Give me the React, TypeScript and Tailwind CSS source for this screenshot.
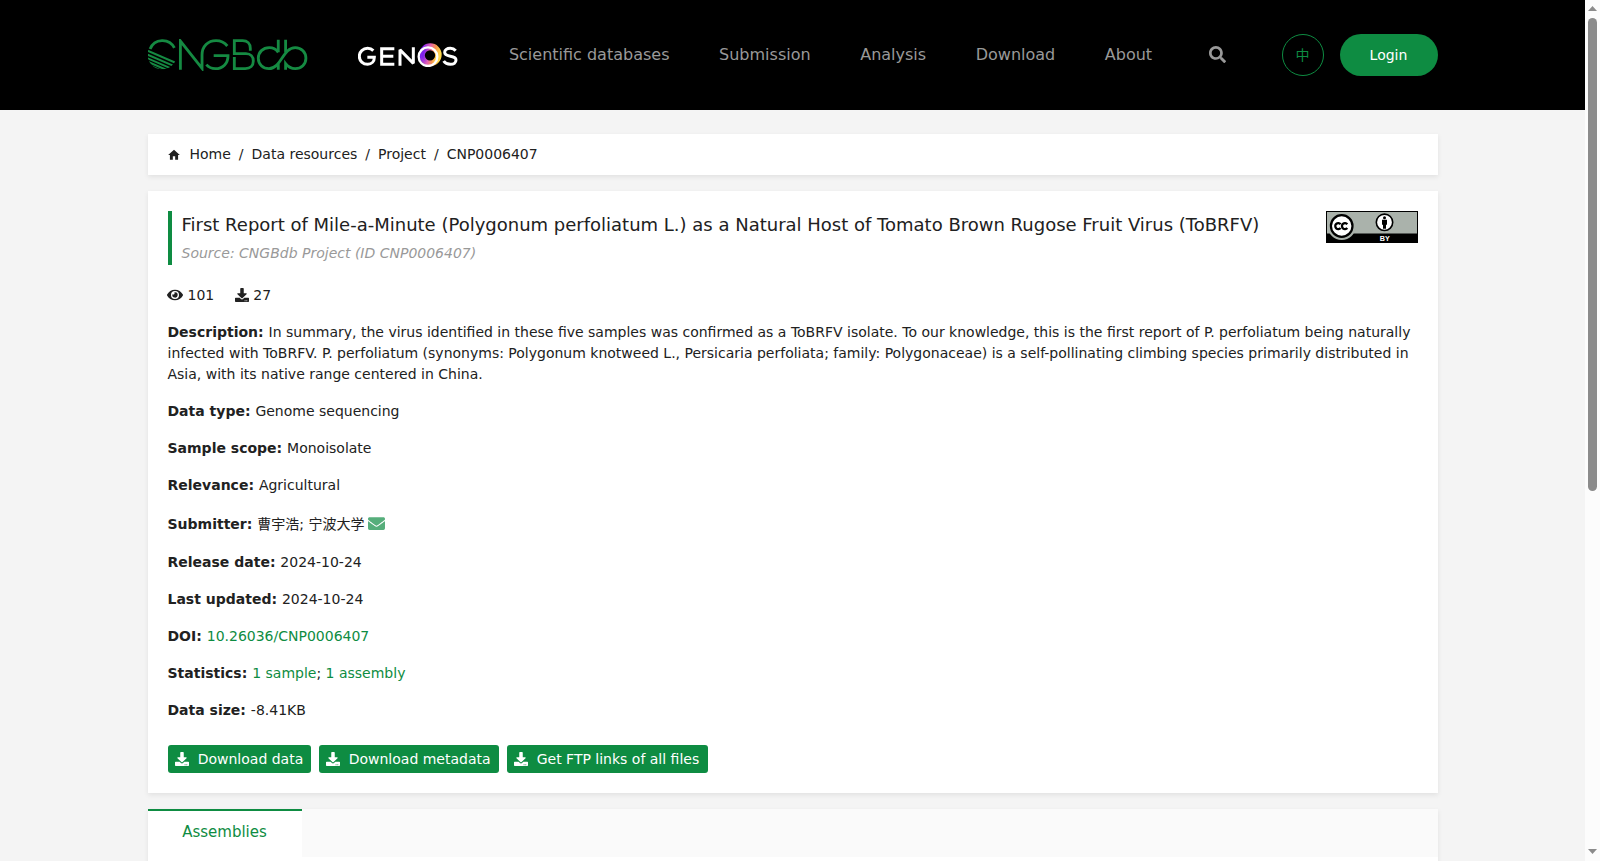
import { FaDownload, FaEnvelope, FaEye, FaSearch } from 'react-icons/fa';
import { MdHome } from 'react-icons/md';

const navItems = ['Scientific databases', 'Submission', 'Analysis', 'Download', 'About'];

const breadcrumbs = ['Home', 'Data resources', 'Project', 'CNP0006407'];

const downloads = [
  { label: 'Download data', width: 'w-[143px]' },
  { label: 'Download metadata', width: 'w-[180px]' },
  { label: 'Get FTP links of all files', width: 'w-[201px]' },
];

function Logo() {
  return (
    <svg viewBox="24 28 480 94" className="mt-[2px] w-[160px] h-[31.3px] shrink-0" fill="none" stroke="#158a42" strokeWidth="8.5">
      <defs>
        <clipPath id="globe">
          <circle cx="66" cy="75" r="44" />
        </clipPath>
      </defs>
      <path d="M30 58A40 40 0 0 1 103 55" />
      <g clipPath="url(#globe)" strokeWidth="6">
        <path d="M22 63L110 101M20 74L104 110M20 85L94 117M24 97L80 121M34 110L66 124" />
      </g>
      <path d="M121 120V34L186 116V76C186 50 204 33 228 33C242 33 254 39 262 49" />
      <path d="M221 78H264C264 102 248 117 226 117C214 117 205 112 199 105" />
      <path d="M331 63V56C331 42 322 33 308 33H283V72H318C332 72 340 82 340 94C340 108 331 117 316 117H283V82" />
      <path d="M415 30V68M415 68C408 58 398 54 388 54C369 54 355 67 355 86C355 104 369 117 387 117C424 117 428 54 466 54C485 54 498 68 498 86C498 104 484 117 466 117C453 117 445 112 437 102V120M415 120V99M437 30V68" />
    </svg>
  );
}

function GenosLogo() {
  return (
    <svg viewBox="38 38 300 74" className="mt-[2px] w-[100px] h-[24.7px] shrink-0" fill="none" stroke="#fff" strokeWidth="9">
      <defs>
        <linearGradient id="ring" x1="0" y1="0.4" x2="1" y2="0.6">
          <stop offset="0" stopColor="#7c1ff0" />
          <stop offset="0.4" stopColor="#e260b4" />
          <stop offset="0.7" stopColor="#f5914e" />
          <stop offset="1" stopColor="#ffd84a" />
        </linearGradient>
      </defs>
      <path d="M84 61C79 56 73 54 67 54C53 54 42 64 42 78C42 92 53 102 67 102C79 102 87 93 87 81H66" />
      <path d="M147 55H109V102H147M109 78H144" />
      <path d="M164 106V58L204 99V51" strokeLinejoin="bevel" />
      <path d="M331 61C326 55 321 54 315 54C305 54 298 59 298 66C298 84 332 71 332 89C332 97 325 102 315 102C305 102 299 98 295 92" />
      <circle cx="255" cy="73" r="27" stroke="url(#ring)" strokeWidth="14" />
      <circle cx="254" cy="75" r="20" stroke="url(#ring)" strokeWidth="9" />
      <circle cx="248" cy="79" r="28" strokeWidth="7" />
    </svg>
  );
}

function LicenseBadge() {
  return (
    <svg viewBox="0 0 92 32" className="w-[92px] h-8 shrink-0">
      <rect width="92" height="32" fill="#000" />
      <rect x="1" y="1" width="90" height="21.5" fill="#aab2ab" />
      <circle cx="15.7" cy="15" r="14" fill="#aab2ab" />
      <circle cx="15.7" cy="15" r="10.8" fill="#fff" stroke="#000" strokeWidth="2.2" />
      <path d="M14.6 13.2A3 3 0 1 0 14.6 17M21.3 13.2A3 3 0 1 0 21.3 17" fill="none" stroke="#000" strokeWidth="2.3" />
      <circle cx="58.5" cy="11.3" r="8.2" fill="#fff" stroke="#000" strokeWidth="1.6" />
      <circle cx="58.5" cy="6.7" r="1.5" />
      <path d="M56 8.8h5v5h-1v4h-3v-4h-1z" />
      <text x="58.7" y="30.4" fill="#fff" textAnchor="middle" fontSize="7.2" fontWeight="bold" fontFamily="Liberation Sans, sans-serif">
        BY
      </text>
    </svg>
  );
}

function Field({ label, children }) {
  return (
    <p className="mb-4">
      <b>{label}: </b>
      {children}
    </p>
  );
}

function Header() {
  return (
    <header className="h-[110px] bg-black">
      <div className="w-[1290px] h-[108px] mx-auto flex items-center">
        <Logo />
        <div className="ml-[50px]">
          <GenosLogo />
        </div>
        <nav className="ml-[51.4px] mt-[2px] flex gap-[49.6px] text-base text-[#999]">
          {navItems.map((item) => (
            <a key={item} className="whitespace-nowrap">
              {item}
            </a>
          ))}
        </nav>
        <FaSearch className="ml-auto mt-px w-[17px] h-[17px] text-[#999]" />
        <button className="ml-[56px] mt-[2px] w-[42px] h-[42px] pb-[2px] rounded-full border border-[#0e8c42] text-[#0e8c42] text-sm font-['Noto_Sans_CJK_SC',sans-serif]">
          中
        </button>
        <button className="ml-4 mt-[2px] w-[98px] h-[42px] rounded-full bg-[#0e8c42] text-white text-sm">Login</button>
      </div>
    </header>
  );
}

function ScrollBar() {
  return (
    <div className="w-[15px] h-full shrink-0 bg-[#fcfcfc] flex flex-col items-center">
      <svg viewBox="0 0 9 5" className="w-[9px] h-[5px] mt-[6px]" fill="#8b8b8b">
        <path d="M0 5L4.5 0L9 5z" />
      </svg>
      <div className="mt-[7px] w-[9px] h-[473px] rounded-full bg-[#8b8b8b]" />
      <svg viewBox="0 0 9 5" className="w-[9px] h-[5px] mt-auto mb-[7px]" fill="#8b8b8b">
        <path d="M0 0L4.5 5L9 0z" />
      </svg>
    </div>
  );
}

export default function App() {
  return (
    <div className="flex w-[1600px] h-[861px] overflow-hidden font-['DejaVu_Sans','Noto_Sans_CJK_SC',sans-serif] text-sm leading-[21px] text-[#212121]">
      <div className="flex-1 h-full overflow-hidden bg-[#f4f4f4]">
        <Header />
        <main className="w-[1290px] mx-auto pt-6">
          {/* Breadcrumb */}
          <div className="h-[41px] pl-[19.5px] pr-5 flex items-center bg-white shadow-[0_2px_5px_rgba(0,0,0,0.08)]">
            <MdHome className="w-[14px] h-[14px] mr-[8.5px]" />
            {breadcrumbs.map((crumb, i) => (
              <span key={crumb}>
                {i > 0 && <span className="mx-2">/</span>}
                {crumb}
              </span>
            ))}
          </div>

          {/* Project details */}
          <section className="mt-4 h-[602px] p-5 bg-white shadow-[0_2px_5px_rgba(0,0,0,0.08)]">
            <div className="flex justify-between items-start">
              <div className="h-[54px] border-l-4 border-[#0e8c42] pl-[10px]">
                <h1 className="text-lg leading-[27px]">
                  First Report of Mile-a-Minute (Polygonum perfoliatum L.) as a Natural Host of Tomato Brown Rugose Fruit
                  Virus (ToBRFV)
                </h1>
                <p className="mt-[5px] italic text-[#999]">Source: CNGBdb Project (ID CNP0006407)</p>
              </div>
              <LicenseBadge />
            </div>

            <div className="mt-5 mb-4 flex items-center">
              <FaEye className="-mt-px -ml-[0.5px] w-4 h-4 mr-[4.5px]" />
              101
              <FaDownload className="-mt-px ml-[21px] w-[14px] h-[14px] mr-1" />
              27
            </div>

            <Field label="Description">
              In summary, the virus identified in these five samples was confirmed as a ToBRFV isolate. To our
              knowledge, this is the first report of P. perfoliatum being naturally infected with ToBRFV. P. perfoliatum
              (synonyms: Polygonum knotweed L., Persicaria perfoliata; family: Polygonaceae) is a self-pollinating
              climbing species primarily distributed in Asia, with its native range centered in China.
            </Field>
            <Field label="Data type">Genome sequencing</Field>
            <Field label="Sample scope">Monoisolate</Field>
            <Field label="Relevance">Agricultural</Field>
            <div className="mb-4 h-6 flex items-center">
              <b className="mr-[5px]">Submitter:</b>曹宇浩; 宁波大学
              <FaEnvelope className="-mt-px ml-[3px] w-[17px] h-[17px] text-[#56ae7b]" />
            </div>
            <Field label="Release date">2024-10-24</Field>
            <Field label="Last updated">2024-10-24</Field>
            <Field label="DOI">
              <a className="text-[#0e8c42]">10.26036/CNP0006407</a>
            </Field>
            <Field label="Statistics">
              <a className="text-[#0e8c42]">1 sample</a>; <a className="text-[#0e8c42]">1 assembly</a>
            </Field>
            <Field label="Data size">-8.41KB</Field>

            <div className="mt-6 flex gap-2">
              {downloads.map(({ label, width }) => (
                <button
                  key={label}
                  className={`${width} h-7 pl-[7.5px] flex items-center rounded-[3px] bg-[#0e8c42] text-white whitespace-nowrap`}
                >
                  <FaDownload className="w-[14px] h-[14px] mr-[8.7px]" />
                  {label}
                </button>
              ))}
            </div>
          </section>

          {/* Tabs */}
          <section className="mt-4 h-[200px] bg-white shadow-[0_2px_5px_rgba(0,0,0,0.08)]">
            <div className="h-12 bg-[#fafafa]">
              <div className="w-[154px] h-full border-t-2 border-[#0e8c42] bg-white text-[#0e8c42] text-[15px] text-center leading-[42px]">
                Assemblies
              </div>
            </div>
          </section>
        </main>
      </div>
      <ScrollBar />
    </div>
  );
}
